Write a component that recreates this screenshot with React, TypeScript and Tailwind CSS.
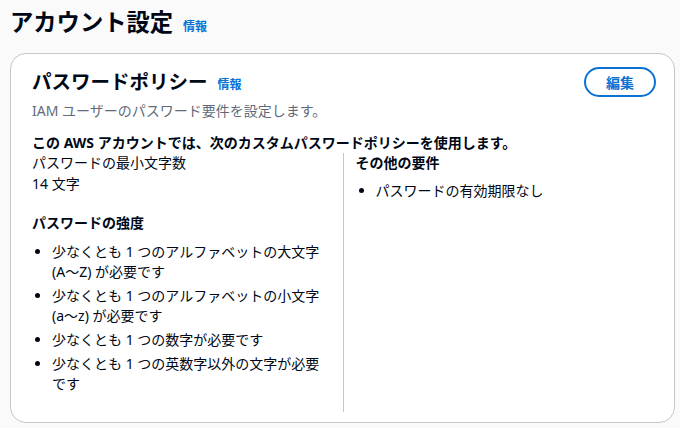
import React from 'react';

const font = { fontFamily: '"Noto Sans", "Noto Sans CJK JP", sans-serif' };

const strengthRules = [
  '少なくとも 1 つのアルファベットの大文字 (A〜Z) が必要です',
  '少なくとも 1 つのアルファベットの小文字 (a〜z) が必要です',
  '少なくとも 1 つの数字が必要です',
  '少なくとも 1 つの英数字以外の文字が必要です',
];

const InfoLink: React.FC = () => (
  <a href="#" className="text-[12px] font-bold leading-4 text-[#0972d3]">
    情報
  </a>
);

const App: React.FC = () => {
  return (
    <div className="min-h-screen bg-[#fafafa] text-[#000716]" style={font}>
      <div className="flex items-baseline gap-[10px] px-[10px] pt-[7px]">
        <h1 className="text-[23.3px] font-bold leading-[30px]">アカウント設定</h1>
        <InfoLink />
      </div>

      {/* Password policy card */}
      <div className="ml-[10px] mr-[5px] mt-[16px] rounded-[16px] border border-[#c6c6cd] bg-white px-[21px] pt-[13px] pb-[10px]">
        <div className="flex items-center justify-between">
          <div className="flex items-baseline gap-[10px]">
            <h2 className="text-[19.5px] font-bold leading-6">パスワードポリシー</h2>
            <InfoLink />
          </div>
          <button className="mr-[-3px] h-[30px] w-[72px] rounded-full border-2 border-[#0972d3] text-[14px] font-bold text-[#0972d3]">
            編集
          </button>
        </div>
        <p className="mt-[4px] text-[14px] leading-5 text-[#5f6b7a]">
          IAM ユーザーのパスワード要件を設定します。
        </p>
        <p className="mt-[12px] text-[14px] font-bold leading-5">
          この AWS アカウントでは、次のカスタムパスワードポリシーを使用します。
        </p>

        <div className="grid grid-cols-2 text-[14px] leading-5">
          <div className="pr-3 pb-[18px]">
            <div>パスワードの最小文字数</div>
            <div className="mt-px">14 文字</div>
            <h3 className="mt-[19px] font-bold">パスワードの強度</h3>
            <ul className="mt-[9px] flex list-disc flex-col gap-[4px] pl-5">
              {strengthRules.map((rule) => (
                <li key={rule}>{rule}</li>
              ))}
            </ul>
          </div>
          <div className="border-l border-[#c6c6cd] pl-3">
            <h3 className="font-bold">その他の要件</h3>
            <ul className="mt-[8px] list-disc pl-5">
              <li>パスワードの有効期限なし</li>
            </ul>
          </div>
        </div>
      </div>
    </div>
  );
};

export default App;
